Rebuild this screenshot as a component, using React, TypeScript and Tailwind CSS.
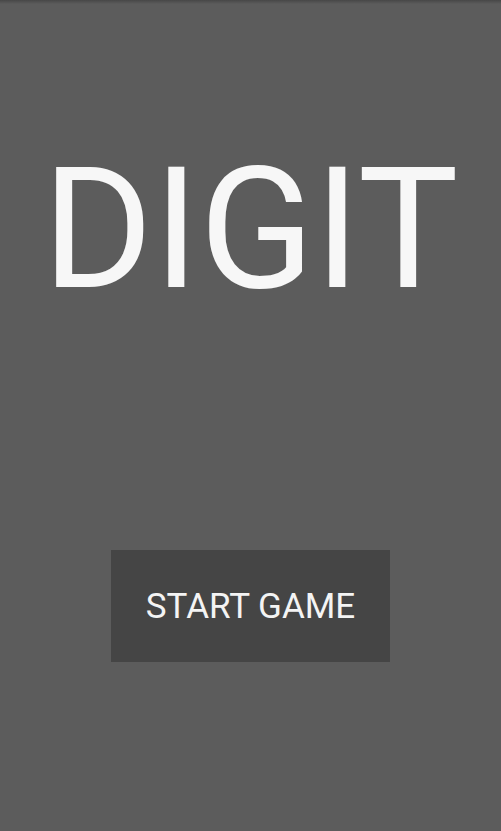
export default function App() {
  return (
    <div
      className="relative flex h-[831px] w-[501px] flex-col items-center bg-[#5c5c5c]"
      style={{ fontFamily: "Roboto, 'Noto Sans', sans-serif" }}
    >
      <div className="absolute left-0 right-0 top-0 h-[4px] bg-gradient-to-b from-[#474747] to-[#5c5c5c]" />
      <h1 className="mt-[145px] text-[169px] font-normal leading-none tracking-[0px] text-[#f7f7f7]">
        DIGIT
      </h1>
      <button className="mt-[236px] flex h-[112px] w-[279px] items-center justify-center bg-[#454545] text-[35px] font-normal leading-none text-[#f4f4f4]">
        START GAME
      </button>
    </div>
  );
}
